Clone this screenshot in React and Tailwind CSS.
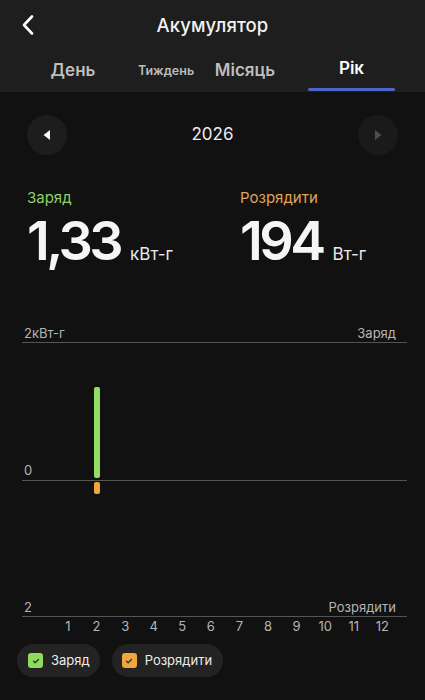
import React from "react";

const months = [1, 2, 3, 4, 5, 6, 7, 8, 9, 10, 11, 12];
const charge = { 2: 91 };
const discharge = { 2: 12 };

function Check({ color }) {
  return (
    <span className={`flex h-[15px] w-[15px] items-center justify-center rounded-[3px] ${color}`}>
      <svg width="8" height="8" viewBox="0 0 8 8">
        <polyline points="1.5,4.2 3.2,5.8 6.5,2.4" fill="none" stroke="#2a3a20" strokeWidth="1.4" strokeLinecap="round" strokeLinejoin="round" />
      </svg>
    </span>
  );
}

export default function App() {
  return (
    <div className="min-h-[700px] w-[425px] bg-[#111111] text-white" style={{ fontFamily: "Inter, 'Noto Sans', sans-serif" }}>
      <div className="bg-[#1e1e1e]">
        <div className="relative flex h-[50px] items-center justify-center pt-[2px]">
          <svg className="absolute left-[20px] top-[14px]" width="16" height="22" viewBox="0 0 16 22">
            <polyline points="12,2.5 4,11 12,19.5" fill="none" stroke="#fff" strokeWidth="2.6" strokeLinecap="round" strokeLinejoin="round" />
          </svg>
          <span className="text-[18.5px] font-medium tracking-[0.1px] text-[#f2f2f2]">Акумулятор</span>
        </div>
        <div className="flex h-[42px] items-stretch">
          <div className="ml-[27px] flex w-[92px] items-center justify-center text-[17px] font-semibold text-[#bdbdbd]">День</div>
          <div className="ml-[7px] flex w-[80px] items-center justify-center text-[12.5px] font-semibold text-[#bdbdbd]">Тиждень</div>
          <div className="flex w-[78px] items-center justify-center text-[17px] font-semibold text-[#bdbdbd]">Місяць</div>
          <div className="ml-[24px] flex w-[87px] flex-col items-center justify-between">
            <span className="flex flex-1 items-center text-[17px] font-semibold text-white">Рік</span>
            <span className="mb-[1px] h-[3px] w-[87px] rounded-full bg-[#4b68c9]" />
          </div>
        </div>
      </div>

      <div className="mt-[23px] flex items-center justify-between px-[27px]">
        <button className="flex h-[40px] w-[40px] items-center justify-center rounded-full bg-[#1d1d1d]">
          <svg width="10" height="12" viewBox="0 0 10 12"><polygon points="8,1 8,11 1.5,6" fill="#f5f5f5" /></svg>
        </button>
        <span className="text-[17px] font-normal text-[#ededed]">2026</span>
        <button className="flex h-[40px] w-[40px] items-center justify-center rounded-full bg-[#1a1a1a]">
          <svg width="10" height="12" viewBox="0 0 10 12"><polygon points="2,1 2,11 8.5,6" fill="#4e4e4e" /></svg>
        </button>
      </div>

      <div className="mt-[34px] flex px-[27px]">
        <div className="w-[213px]">
          <div className="text-[15px] leading-[18px] text-[#8fcf6b]">Заряд</div>
          <div className="mt-[6px] flex items-baseline">
            <span className="text-[54px] font-semibold leading-[56px] tracking-[-3.6px] text-[#f5f5f5]">1,33</span>
            <span className="ml-[10px] text-[17px] text-[#e8e8e8]">кВт-г</span>
          </div>
        </div>
        <div>
          <div className="text-[15px] leading-[18px] text-[#e0a45c]">Розрядити</div>
          <div className="mt-[6px] flex items-baseline">
            <span className="text-[54px] font-semibold leading-[56px] tracking-[-3.6px] text-[#f5f5f5]">194</span>
            <span className="ml-[10px] text-[17px] text-[#e8e8e8]">Вт-г</span>
          </div>
        </div>
      </div>

      <div className="ml-[22px] mt-[56px] w-[385px]">
        <div className="flex justify-between border-b border-[#555555] px-[2px] pb-[1px] text-[13px] leading-[16px] text-[#b5b5b5]">
          <span>2кВт-г</span>
          <span className="pr-[9px]">Заряд</span>
        </div>
        <div className="relative flex h-[138px] items-end border-b border-[#555555] px-[2px] pb-[2px] text-[13px] leading-[16px] text-[#b5b5b5]">
          <span>0</span>
          <div className="absolute bottom-[2px] left-[31.7px] grid h-[130px] w-[343px] grid-cols-12 items-end">
            {months.map((m) => (
              <div key={m} className="flex justify-center">
                {charge[m] ? <div className="w-[6px] rounded-[2px] bg-[#93dd62]" style={{ height: charge[m] }} /> : null}
              </div>
            ))}
          </div>
        </div>
        <div className="relative flex h-[136px] items-end justify-between border-b border-[#555555] px-[2px] pb-[1px] text-[13px] leading-[16px] text-[#b5b5b5]">
          <span>2</span>
          <span className="pr-[9px]">Розрядити</span>
          <div className="absolute left-[31.7px] top-[1px] grid w-[343px] grid-cols-12 items-start">
            {months.map((m) => (
              <div key={m} className="flex justify-center">
                {discharge[m] ? <div className="w-[6px] rounded-[2px] bg-[#f0a63c]" style={{ height: discharge[m] }} /> : null}
              </div>
            ))}
          </div>
        </div>
        <div className="ml-[31.7px] mt-[1px] grid w-[343px] grid-cols-12 text-[13px] leading-[16px] text-[#b5b5b5]">
          {months.map((m) => (
            <span key={m} className="text-center">{m}</span>
          ))}
        </div>
      </div>

      <div className="ml-[17px] mt-[10px] flex gap-[12px]">
        <div className="flex h-[33px] items-center gap-[8px] rounded-full bg-[#232323] pl-[11px] pr-[10px]">
          <Check color="bg-[#8fdb5c]" />
          <span className="text-[13px] text-[#ececec]">Заряд</span>
        </div>
        <div className="flex h-[33px] items-center gap-[8px] rounded-full bg-[#232323] pl-[10px] pr-[11px]">
          <Check color="bg-[#f2a640]" />
          <span className="text-[13px] text-[#ececec]">Розрядити</span>
        </div>
      </div>
    </div>
  );
}
